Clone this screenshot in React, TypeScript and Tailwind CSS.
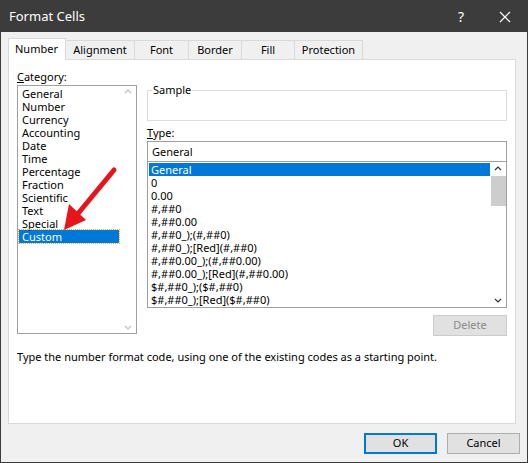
import React from "react";

const categories = [
  "General", "Number", "Currency", "Accounting", "Date", "Time",
  "Percentage", "Fraction", "Scientific", "Text", "Special", "Custom",
];

const types = [
  "General", "0", "0.00", "#,##0", "#,##0.00", "#,##0_);(#,##0)",
  "#,##0_);[Red](#,##0)", "#,##0.00_);(#,##0.00)", "#,##0.00_);[Red](#,##0.00)",
  "$#,##0_);($#,##0)", "$#,##0_);[Red]($#,##0)",
];

const tabs = ["Alignment", "Font", "Border", "Fill", "Protection"];
const tabW = [69, 54, 53, 53, 68];

export default function App() {
  return (
    <div
      className="relative w-[528px] h-[463px] bg-[#f0f0f0] border border-[#3c3c3c] text-[11px] text-black overflow-hidden"
      style={{ fontFamily: '"Noto Sans", "Open Sans", sans-serif' }}
    >
      <div className="h-[31px] bg-[#3c3c3c] flex items-center pl-[8px] text-white text-[13px]">
        <span className="flex-1">Format Cells</span>
        <span className="w-[44px] text-center text-[14px]">?</span>
        <span className="w-[44px] flex justify-center">
          <svg width="12" height="12" viewBox="0 0 12 12" stroke="white" strokeWidth="1.2">
            <path d="M1 1L11 11M11 1L1 11" />
          </svg>
        </span>
      </div>

      <div className="px-[7px] pt-[5px]">
        <div className="flex items-end h-[22px]">
          <div className="w-[58px] h-[22px] bg-white border border-b-0 border-[#d9d9d9] pl-[6px] pt-[2px] relative z-10 -mb-px pb-px">
            Number
          </div>
          {tabs.map((t, i) => (
            <div
              key={t}
              style={{ width: tabW[i] }}
              className="h-[19px] border border-l-0 border-b-0 border-[#d9d9d9] bg-[#f0f0f0] flex items-center justify-center"
            >
              {t}
            </div>
          ))}
        </div>

        <div className="w-[508px] h-[365px] bg-white border border-[#d9d9d9] relative">
          <div className="flex px-[8px] pt-[9px]">
            <div className="w-[121px]">
              <div className="h-[16px] leading-[16px]"><u>C</u>ategory:</div>
              <div className="h-[249px] border border-[#a0a0a0] flex">
                <div className="flex-1 pl-[1px] pt-[1px]">
                  {categories.map((c) => (
                    <div
                      key={c}
                      className={`h-[13px] leading-[13px] pl-[3px] ${
                        c === "Custom" ? "bg-[#0078d7] text-white w-[100px] outline-1 outline-dotted outline-[#f4a742]" : ""
                      }`}
                    >
                      {c}
                    </div>
                  ))}
                </div>
                <div className="w-[17px] flex flex-col justify-between items-center py-[2px]">
                  <svg width="8" height="6" viewBox="0 0 8 6" fill="none" stroke="#c0c0c0" strokeWidth="1.2"><path d="M1 5L4 2L7 5" /></svg>
                  <svg width="8" height="6" viewBox="0 0 8 6" fill="none" stroke="#c0c0c0" strokeWidth="1.2"><path d="M1 1L4 4L7 1" /></svg>
                </div>
              </div>
            </div>

            <div className="ml-[10px] w-[365px]">
              <div className="relative h-[31px] mt-[21px] border border-[#dcdcdc]">
                <span className="absolute -top-[9px] left-[4px] bg-white px-[1px] leading-[16px]">Sample</span>
              </div>
              <div className="mt-[4px] h-[16px] leading-[16px]"><u>T</u>ype:</div>
              <div className="h-[21px] border border-[#a0a0a0] pl-[4px] leading-[19px]">General</div>
              <div className="h-[146px] border border-t-0 border-[#a0a0a0] flex">
                <div className="flex-1 pl-[1px] pt-[1px]">
                  {types.map((t) => (
                    <div
                      key={t}
                      className={`h-[13px] leading-[13px] pl-[2px] whitespace-nowrap ${
                        t === "General" ? "bg-[#0078d7] text-white" : ""
                      }`}
                    >
                      {t}
                    </div>
                  ))}
                </div>
                <div className="w-[16px] flex flex-col items-center py-[2px]">
                  <svg width="8" height="8" viewBox="0 0 8 6" fill="none" stroke="#333" strokeWidth="1.2"><path d="M1 5L4 2L7 5" /></svg>
                  <div className="w-[15px] h-[30px] bg-[#cdcdcd] mt-[4px]" />
                  <div className="flex-1" />
                  <svg width="8" height="8" viewBox="0 0 8 6" fill="none" stroke="#333" strokeWidth="1.2"><path d="M1 1L4 4L7 1" /></svg>
                </div>
              </div>
              <div className="flex justify-end mt-[7px]">
                <div className="w-[74px] h-[21px] border border-[#cccccc] bg-[#e1e1e1] text-[#8a8a8a] flex items-center justify-center">
                  Delete
                </div>
              </div>
            </div>
          </div>
          <div className="px-[8px] mt-[13px]">
            Type the number format code, using one of the existing codes as a starting point.
          </div>

          <svg className="absolute left-[48px] top-[106px]" width="64" height="70" viewBox="0 0 64 70">
            <path d="M57 4L19 50" stroke="#e8141c" strokeWidth="5" strokeLinecap="round" />
            <path d="M7 64L12 38L29 54Z" fill="#e8141c" />
          </svg>
        </div>

        <div className="flex justify-end gap-[10px] mt-[9px]">
          <div className="w-[73px] h-[21px] border-2 border-[#0078d7] bg-[#e1e1e1] flex items-center justify-center">OK</div>
          <div className="w-[73px] h-[21px] border border-[#adadad] bg-[#e1e1e1] flex items-center justify-center">Cancel</div>
        </div>
      </div>
    </div>
  );
}
